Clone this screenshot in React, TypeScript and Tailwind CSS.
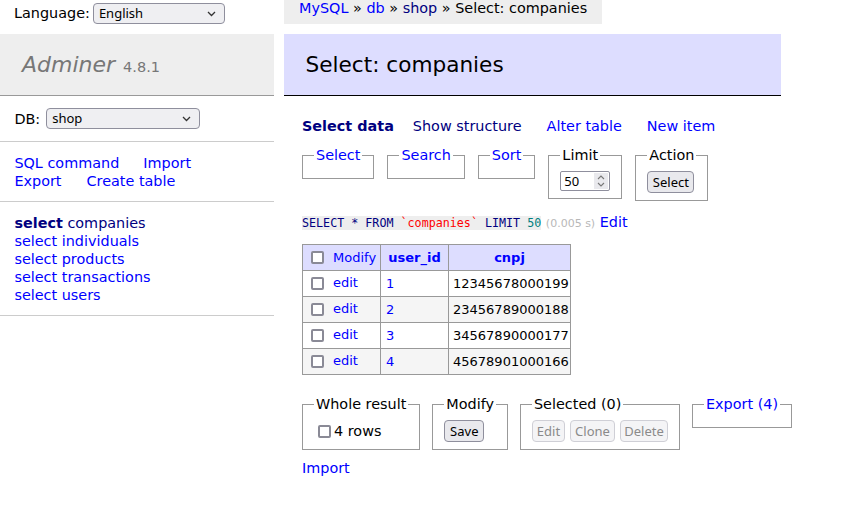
import type { ReactNode } from "react";

const ctl = "font-['Noto_Sans','Open_Sans',sans-serif] text-[13px]";

const tables = ["individuals", "products", "transactions", "users"];

const rows = [
  { id: 1, cnpj: "12345678000199" },
  { id: 2, cnpj: "23456789000188" },
  { id: 3, cnpj: "34567890000177" },
  { id: 4, cnpj: "45678901000166" },
];

function Dropdown({ value, className }: { value: string; className: string }) {
  return (
    <span className={`relative inline-flex ${className}`}>
      <select
        defaultValue={value}
        className={`appearance-none w-full h-[21px] pl-[5px] pr-[22px] border border-[#8f8f9d] rounded-[4px] bg-[#efeff2] text-black leading-[19px] ${ctl}`}
      >
        <option>{value}</option>
      </select>
      <svg
        className="pointer-events-none absolute right-[9px] top-[8px]"
        width="9"
        height="6"
        viewBox="0 0 9 6"
      >
        <path d="M1 1l3.5 3.5L8 1" fill="none" stroke="#333" strokeWidth="1.3" />
      </svg>
    </span>
  );
}

function Check({ className = "" }: { className?: string }) {
  return (
    <input
      type="checkbox"
      className={`appearance-none w-[13px] h-[13px] shrink-0 border-2 border-[#8a8a96] rounded-[2px] bg-white ${className}`}
    />
  );
}

function Btn({ children, disabled = false, className }: { children: ReactNode; disabled?: boolean; className: string }) {
  return (
    <button
      disabled={disabled}
      className={`h-[22px] flex items-center justify-center border rounded-[4px] ${ctl} ${
        disabled
          ? "bg-[#f4f4f6] border-[#cfcfd6] text-[#8a8a8a]"
          : "bg-[#e9e9ed] border-[#8f8f9d] text-black"
      } ${className}`}
    >
      {children}
    </button>
  );
}

function Box({ legend, children }: { legend: ReactNode; children?: ReactNode }) {
  return (
    <fieldset className="border border-[#999] px-[11px] pt-[7px] pb-[7px] min-w-0">
      <legend className="px-[2px] leading-[18px]">{legend}</legend>
      {children}
    </fieldset>
  );
}

export default function App() {
  return (
    <div className="flex min-h-[515px] bg-white text-black font-['DejaVu_Sans',Verdana,sans-serif] text-[14.4px] leading-[18px]">
      <aside className="w-[274px] shrink-0">
        <div className="h-[26px] mb-[8px] px-[14px] flex items-center gap-[3px]">
          <span>Language:</span>
          <Dropdown value="English" className="w-[132px]" />
        </div>
        <h1 className="h-[62px] bg-[#eee] border-b border-[#999] px-[22px] flex items-center gap-[8px] text-[#777]">
          <a className="italic text-[22px] leading-[27px]">Adminer</a>
          <span className="text-[14.5px] leading-[18px] mt-[4px]">4.8.1</span>
        </h1>
        <div className="px-[14.4px] py-[12px] border-b border-[#ccc] flex items-center gap-[6px]">
          <span>DB:</span>
          <Dropdown value="shop" className="w-[154px]" />
        </div>
        <div className="px-[14.4px] py-[11.5px] border-b border-[#ccc] text-[#00f]">
          <div className="flex gap-[24px]">
            <a>SQL command</a>
            <a>Import</a>
          </div>
          <div className="flex gap-[25px]">
            <a>Export</a>
            <a>Create table</a>
          </div>
        </div>
        <ul className="px-[14.4px] py-[11.5px] border-b border-[#ccc]">
          <li className="text-[#000080]">
            <a className="font-bold">select</a> <a>companies</a>
          </li>
          {tables.map((t) => (
            <li key={t} className="text-[#00f]">
              <a>select</a> <a>{t}</a>
            </li>
          ))}
        </ul>
      </aside>

      <main className="ml-[10px] flex flex-col">
        <div className="self-start h-[24px] bg-[#eee] px-[15px] leading-[16px] whitespace-nowrap">
          <a className="text-[#00f]">MySQL</a> » <a className="text-[#00f]">db</a> »{" "}
          <a className="text-[#000080]">shop</a> » Select: companies
        </div>
        <h2 className="mt-[10px] w-[497px] bg-[#ddf] border-b border-black px-[21.6px] py-[17px] text-[21.6px] leading-[27px]">
          Select: companies
        </h2>

        <div className="pl-[18px]">
          <div className="mt-[21px] flex">
            <a className="font-bold text-[#000080] mr-[19px]">Select data</a>
            <a className="text-[#000080] mr-[25px]">Show structure</a>
            <a className="text-[#00f] mr-[25px]">Alter table</a>
            <a className="text-[#00f]">New item</a>
          </div>

          <div className="mt-[11px] flex items-start gap-[13px]">
            <Box legend={<a className="text-[#00f]">Select</a>} />
            <Box legend={<a className="text-[#00f]">Search</a>} />
            <Box legend={<a className="text-[#00f]">Sort</a>} />
            <Box legend="Limit">
              <div className="flex items-center w-[50px] h-[20px] border border-[#8f8f9d] rounded-[2px] bg-white pl-[3px] pr-[1px]">
                <span className={`flex-1 ${ctl}`}>50</span>
                <span className="w-[14px] h-[16px] bg-[#e9e9ed] flex flex-col items-center justify-center gap-[2px]">
                  <svg width="8" height="5" viewBox="0 0 8 5">
                    <path d="M1 4l3-3 3 3" fill="none" stroke="#777" strokeWidth="1.1" />
                  </svg>
                  <svg width="8" height="5" viewBox="0 0 8 5">
                    <path d="M1 1l3 3 3-3" fill="none" stroke="#777" strokeWidth="1.1" />
                  </svg>
                </span>
              </div>
            </Box>
            <Box legend="Action">
              <Btn className="w-[47px]">Select</Btn>
            </Box>
          </div>

          <p className="mt-[12px] whitespace-nowrap">
            <code className="bg-[#eee] font-['DejaVu_Sans_Mono',monospace] text-[11.7px] text-[#000080]">
              SELECT * FROM <span className="text-[#f00]">`companies`</span> LIMIT{" "}
              <span className="text-[#007f7f]">50</span>
            </code>{" "}
            <span className="text-[11px] text-[#b8b8b8]">(0.005 s)</span>{" "}
            <a className="text-[#00f]">Edit</a>
          </p>

          <table className="mt-[11px] w-[268px] table-fixed border-collapse text-[13px] leading-[16px]">
            <colgroup>
              <col className="w-[78px]" />
              <col className="w-[68px]" />
              <col className="w-[122px]" />
            </colgroup>
            <thead>
              <tr className="h-[26px] bg-[#ddf]">
                <td className="border border-[#999] px-[4px] py-0">
                  <div className="flex items-center gap-[9px]">
                    <Check className="ml-[4px]" />
                    <a className="text-[#00f]">Modify</a>
                  </div>
                </td>
                <th className="border border-[#999] py-0 font-bold text-center text-[#00f]">
                  <a>user_id</a>
                </th>
                <th className="border border-[#999] py-0 font-bold text-center text-[#00f]">
                  <a>cnpj</a>
                </th>
              </tr>
            </thead>
            <tbody>
              {rows.map((r, i) => (
                <tr key={r.id} className={`h-[26px] ${i % 2 === 1 ? "bg-[#f5f5f5]" : "bg-white"}`}>
                  <td className="border border-[#999] px-[4px] py-0">
                    <div className="flex items-center gap-[9px]">
                      <Check className="ml-[4px]" />
                      <a className="text-[#00f] -mt-[2px]">edit</a>
                    </div>
                  </td>
                  <td className="border border-[#999] px-[5px] py-0 text-[#00f]">{r.id}</td>
                  <td className="border border-[#999] px-[4px] py-0">{r.cnpj}</td>
                </tr>
              ))}
            </tbody>
          </table>

          <div className="mt-[20px] flex items-start gap-[12px]">
            <Box legend="Whole result">
              <label className="h-[22px] flex items-center gap-[3px]">
                <Check className="ml-[4px]" />
                <span>4 rows</span>
              </label>
            </Box>
            <Box legend="Modify">
              <Btn className="w-[40px]">Save</Btn>
            </Box>
            <Box legend="Selected (0)">
              <div className="flex gap-[5px]">
                <Btn disabled className="w-[33px]">Edit</Btn>
                <Btn disabled className="w-[45px]">Clone</Btn>
                <Btn disabled className="w-[48px]">Delete</Btn>
              </div>
            </Box>
            <Box legend={<a className="text-[#00f]">Export (4)</a>} />
          </div>

          <p className="mt-[9px]">
            <a className="text-[#00f]">Import</a>
          </p>
        </div>
      </main>
    </div>
  );
}
